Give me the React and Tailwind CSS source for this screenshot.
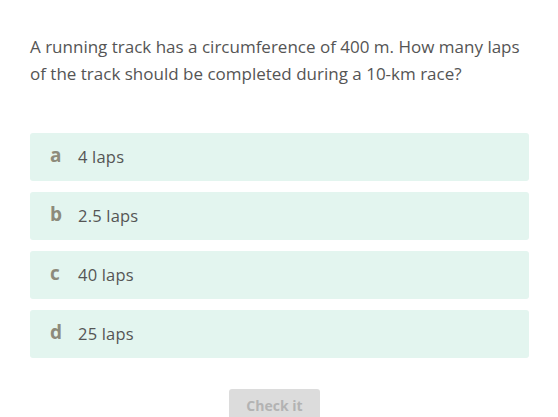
import React from 'react';

const options = [
  { key: 'a', label: '4 laps' },
  { key: 'b', label: '2.5 laps' },
  { key: 'c', label: '40 laps' },
  { key: 'd', label: '25 laps' },
];

export default function App() {
  return (
    <div className="w-[558px] h-[417px] overflow-hidden bg-white px-[30px] pt-[33px] font-['Open_Sans',sans-serif] text-[#555]">
      <p className="text-[17px] leading-[27px] w-[498px]">
        A running track has a circumference of 400 m. How many laps of the track should be completed during a 10-km race?
      </p>
      <div className="mt-[46px] flex flex-col gap-[11px] w-[499px]">
        {options.map(o => (
          <div key={o.key} className="h-[48px] rounded-[3px] bg-[#e3f5ef] flex items-center pl-[20px]">
            <span className="w-[28px] text-[19px] font-bold text-[#8d8b7b] -mt-[3px]">{o.key}</span>
            <span className="text-[16.5px] text-[#555] tracking-[0.2px]">{o.label}</span>
          </div>
        ))}
      </div>
      <div className="mt-[31px] flex">
        <button className="ml-[199px] w-[91px] h-[34px] rounded-[3px] bg-[#dcdcdc] text-[#b3b3b3] text-[14px] font-bold pb-[2px]">
          Check it
        </button>
      </div>
    </div>
  );
}
